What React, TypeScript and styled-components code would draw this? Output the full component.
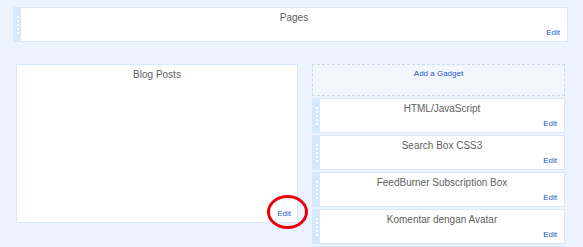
import React from "react";
import styled, { createGlobalStyle } from "styled-components";

const Global = createGlobalStyle`
  html, body {
    margin: 0;
    padding: 0;
    overflow: hidden;
    background: #ecf3fe;
  }
  body {
    font-family: "Liberation Sans", Arial, sans-serif;
  }
`;

const Page = styled.div`
  width: 583px;
  height: 247px;
  padding: 7px 0 0 13px;
  box-sizing: border-box;
  overflow: hidden;
`;

const Columns = styled.div`
  display: flex;
  gap: 14px;
  margin: 22px 0 0 3px;
  align-items: flex-start;
`;

const Main = styled.div`
  position: relative;
  width: 282px;
  height: 159px;
  box-sizing: border-box;
  background: #fff;
  border: 1px solid #d9e9fc;
  display: flex;
  flex-direction: column;
  padding: 4px 6px 4px;
`;

const Sidebar = styled.div`
  width: 253px;
  display: flex;
  flex-direction: column;
  gap: 2px;
`;

const AddGadget = styled.div`
  height: 32px;
  box-sizing: border-box;
  border: 1px dashed #c9d9ee;
  background: #f2f7fe;
  display: flex;
  justify-content: center;
  padding-top: 4px;
  font-size: 8px;
  line-height: 9px;
  color: #2458cc;
`;

const Widget = styled.div<{ $width?: number }>`
  display: flex;
  width: ${(p) => (p.$width ? `${p.$width}px` : "auto")};
  height: 35px;
  flex-shrink: 0;
  box-sizing: border-box;
  border: 1px solid #d9e9fc;
  background: #d6e9fc;
`;

const Handle = styled.div`
  width: 7px;
  display: flex;
  flex-direction: column;
  align-items: center;
  justify-content: center;
  gap: 2px;
`;

const Dot = styled.span`
  width: 2px;
  height: 2px;
  background: #fff;
`;

const Body = styled.div`
  flex: 1;
  background: #fff;
  display: flex;
  flex-direction: column;
  padding: 4px 7px 4px;
`;

const Title = styled.div`
  text-align: center;
  font-size: 10px;
  line-height: 12px;
  color: #616161;
`;

const Edit = styled.a`
  margin-top: auto;
  align-self: flex-end;
  font-size: 8px;
  line-height: 9px;
  color: #2458cc;
  text-decoration: none;
`;

const Circle = styled.div`
  position: absolute;
  left: 250px;
  top: 130px;
  width: 41px;
  height: 34px;
  box-sizing: border-box;
  border: 3px solid #e8000b;
  border-radius: 50%;
`;

const Grip = () => (
  <Handle>
    {[0, 1, 2, 3, 4].map((i) => (
      <Dot key={i} />
    ))}
  </Handle>
);

const Gadget = ({ title, width }: { title?: string; width?: number }) => (
  <Widget $width={width}>
    <Grip />
    <Body>
      {title && <Title>{title}</Title>}
      {title && <Edit href="#">Edit</Edit>}
    </Body>
  </Widget>
);

export default function App() {
  const side = [
    "HTML/JavaScript",
    "Search Box CSS3",
    "FeedBurner Subscription Box",
    "Komentar dengan Avatar",
  ];
  return (
    <>
      <Global />
      <Page>
        <Gadget title="Pages" width={555} />
        <Columns>
          <Main>
            <Title>Blog Posts</Title>
            <Edit href="#">Edit</Edit>
            <Circle />
          </Main>
          <Sidebar>
            <AddGadget>Add a Gadget</AddGadget>
            {side.map((t) => (
              <Gadget key={t} title={t} />
            ))}
            <Gadget />
          </Sidebar>
        </Columns>
      </Page>
    </>
  );
}
